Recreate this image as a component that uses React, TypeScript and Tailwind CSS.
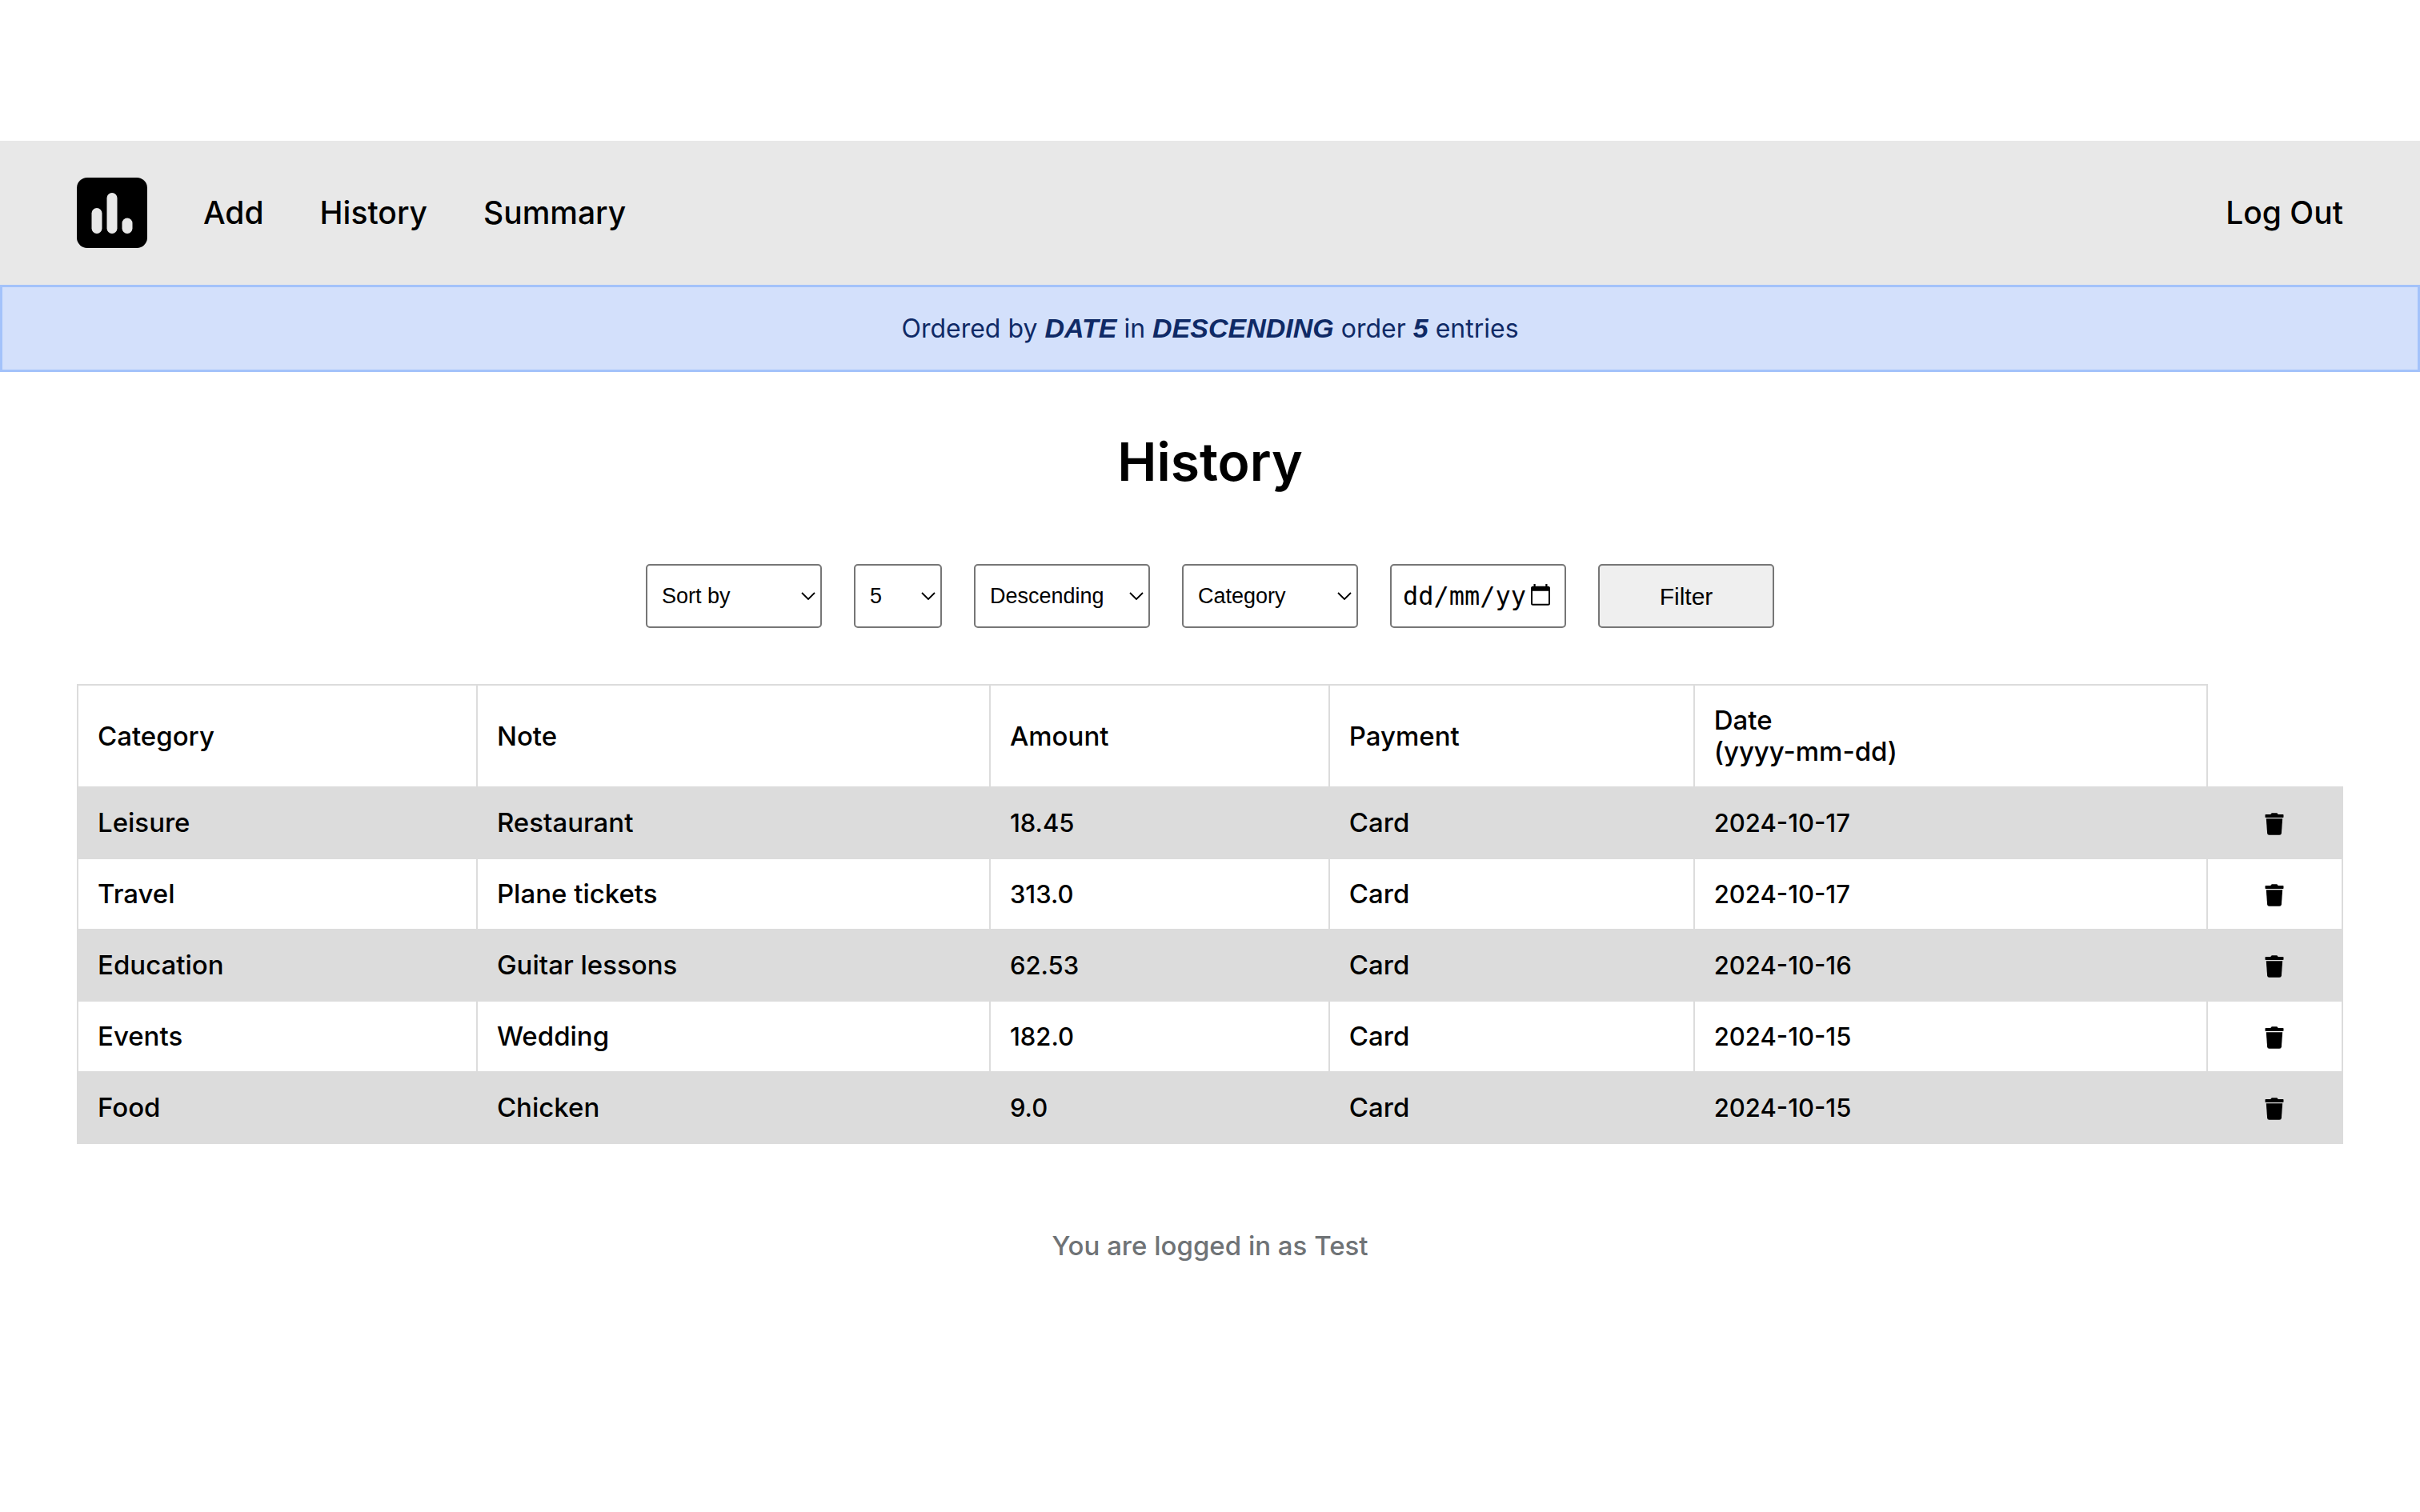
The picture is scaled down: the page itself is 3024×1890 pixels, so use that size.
import React from "react";

type Entry = {
  category: string;
  note: string;
  amount: string;
  payment: string;
  date: string;
};

const entries: Entry[] = [
  { category: "Leisure", note: "Restaurant", amount: "18.45", payment: "Card", date: "2024-10-17" },
  { category: "Travel", note: "Plane tickets", amount: "313.0", payment: "Card", date: "2024-10-17" },
  { category: "Education", note: "Guitar lessons", amount: "62.53", payment: "Card", date: "2024-10-16" },
  { category: "Events", note: "Wedding", amount: "182.0", payment: "Card", date: "2024-10-15" },
  { category: "Food", note: "Chicken", amount: "9.0", payment: "Card", date: "2024-10-15" },
];

function Logo() {
  return (
    <svg viewBox="0 0 88 88" className="size-[88px]" aria-hidden="true">
      <rect width="88" height="88" rx="13" fill="#000" />
      <g fill="#e8e8e8">
        <rect x="18.5" y="38" width="13" height="32" rx="6.5" />
        <rect x="37.5" y="19" width="13" height="51" rx="6.5" />
        <rect x="56.5" y="50.5" width="13" height="19.5" rx="6.5" />
      </g>
    </svg>
  );
}

function TrashIcon() {
  return (
    <svg viewBox="0 0 24 28" className="h-7 w-6" aria-hidden="true" fill="#000">
      <path d="M1.2 2H7.4Q7.8 .3 9.2 .3H14.8Q16.2 .3 16.6 2H22.8Q23.5 2 23.5 2.8V5.2Q23.5 6 22.8 6H1.2Q.5 6 .5 5.2V2.8Q.5 2 1.2 2Z" />
      <path d="M1.8 7.2H22.2L20.9 25.4Q20.7 27.8 18.4 27.8H5.6Q3.3 27.8 3.1 25.4Z" />
    </svg>
  );
}

function Select({ label, options, width }: { label: string; options: string[]; width: string }) {
  return (
    <div className={"relative " + width}>
      <select
        aria-label={label}
        className="h-20 w-full appearance-none rounded-[5px] border-2 border-[#767676] bg-white px-[18px] text-[27px] text-black"
      >
        {options.map((o) => (
          <option key={o}>{o}</option>
        ))}
      </select>
      <svg
        viewBox="0 0 18 10"
        className="pointer-events-none absolute top-[35px] right-2 h-2.5 w-[18px]"
        fill="none"
        stroke="#000"
        strokeWidth="1.8"
        aria-hidden="true"
      >
        <path d="M1 1L9 9L17 1" />
      </svg>
    </div>
  );
}

function DateField() {
  return (
    <div className="relative w-[220px]">
      <input
        type="text"
        aria-label="Date"
        placeholder="dd/mm/yy"
        className="h-20 w-full rounded-[5px] border-2 border-[#767676] bg-white pl-3.5 font-['DejaVu_Sans_Mono',monospace] text-[32px] text-black placeholder:text-black placeholder:opacity-100"
      />
      <svg
        viewBox="0 0 24 27"
        className="pointer-events-none absolute top-[25px] right-5 h-[27px] w-6"
        aria-hidden="true"
      >
        <path
          fill="#000"
          fillRule="evenodd"
          d="M3.5 0H5.7V2.7H18.3V0H20.5V2.7H21.5Q24 2.7 24 5.2V24.2Q24 26.7 21.5 26.7H2.5Q0 26.7 0 24.2V5.2Q0 2.7 2.5 2.7H3.5ZM2 8.7V24.7H22V8.7Z"
        />
      </svg>
    </div>
  );
}

function Th({ children }: { children: React.ReactNode }) {
  return <th className="border-2 border-[#dcdcdc] p-6 text-left font-medium">{children}</th>;
}

function Td({ children }: { children: React.ReactNode }) {
  return <td className="border-2 border-[#dcdcdc] p-6">{children}</td>;
}

function NumberTd({ children }: { children: React.ReactNode }) {
  return <td className="border-2 border-[#dcdcdc] p-6 text-[31px] leading-[39px]">{children}</td>;
}

function Strong({ children }: { children: React.ReactNode }) {
  return (
    <strong className="font-['Liberation_Sans',Arial,sans-serif] text-[34px] font-bold italic">{children}</strong>
  );
}

export default function App() {
  return (
    <div className="min-h-screen bg-white pt-44 font-['Inter',sans-serif] font-medium text-black">
      <header className="flex h-[180px] items-center justify-between bg-[#e8e8e8] px-24">
        <nav className="flex items-center gap-[70px] text-[39px]">
          <a href="#home" aria-label="Home">
            <Logo />
          </a>
          <a href="#add">Add</a>
          <a href="#history">History</a>
          <a href="#summary">Summary</a>
        </nav>
        <a href="#logout" className="text-[39px]">
          Log Out
        </a>
      </header>

      <p className="flex h-[109px] items-center justify-center border-[3px] border-[#a3c2fa] bg-[#d3e0fb] text-[32px] font-normal text-[#0f2a66]">
        <span>
          Ordered by <Strong>DATE</Strong> in <Strong>DESCENDING</Strong> order <Strong>5</Strong> entries
        </span>
      </p>

      <main className="px-24">
        <h1 className="pt-[72px] text-center text-[66px] leading-20 font-semibold">History</h1>

        <form className="mt-[88px] flex justify-center gap-10 font-['Liberation_Sans',Arial,sans-serif] font-normal">
          <Select label="Sort by" width="w-[220px]" options={["Sort by", "Date", "Amount"]} />
          <Select label="Number of entries" width="w-[110px]" options={["5", "10", "20"]} />
          <Select label="Order" width="w-[220px]" options={["Descending", "Ascending"]} />
          <Select label="Category" width="w-[220px]" options={["Category", "Leisure", "Travel"]} />
          <DateField />
          <button
            type="button"
            className="h-20 w-[220px] rounded-[5px] border-2 border-[#767676] bg-[#efefef] text-[30px]"
          >
            Filter
          </button>
        </form>

        <table className="mt-[70px] w-full table-fixed border-collapse text-[33px] leading-[39px]">
          <colgroup>
            <col className="w-[17.63%]" />
            <col className="w-[22.65%]" />
            <col className="w-[14.98%]" />
            <col className="w-[16.11%]" />
            <col className="w-[22.65%]" />
            <col />
          </colgroup>
          <thead>
            <tr>
              <Th>Category</Th>
              <Th>Note</Th>
              <Th>Amount</Th>
              <Th>Payment</Th>
              <Th>
                Date
                <br />
                (yyyy-mm-dd)
              </Th>
            </tr>
          </thead>
          <tbody>
            {entries.map((e) => (
              <tr key={e.category} className="odd:bg-[#dcdcdc]">
                <Td>{e.category}</Td>
                <Td>{e.note}</Td>
                <NumberTd>{e.amount}</NumberTd>
                <Td>{e.payment}</Td>
                <NumberTd>{e.date}</NumberTd>
                <td className="border-2 border-[#dcdcdc]">
                  <button type="button" aria-label={"Delete " + e.note} className="mx-auto block pt-0.5">
                    <TrashIcon />
                  </button>
                </td>
              </tr>
            ))}
          </tbody>
        </table>
      </main>

      <footer className="pt-[108px] text-center text-[33px] leading-[39px] text-[#6f7376]">
        You are logged in as Test
      </footer>
    </div>
  );
}
